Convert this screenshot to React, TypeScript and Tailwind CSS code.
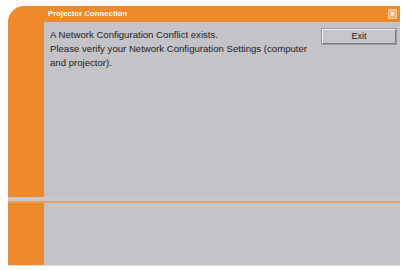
export default function App() {
  return (
    <div className="w-[404px] h-[270px] bg-white pl-[8px] pt-[6px] font-['Liberation_Sans',sans-serif]">
      <div className="w-[392px] flex flex-col">
        {/* title bar */}
        <div className="h-[16px] bg-[#ef8a2a] rounded-tl-[16px] flex items-center justify-between pl-[40px] pr-[3px]">
          <span className="text-white text-[7.6px] font-bold leading-none tracking-[0.1px]">Projector Connection</span>
          <div className="w-[9px] h-[10px] bg-[#f5b070] border border-[#f7c89a] flex items-center justify-center text-white text-[8px] font-bold leading-none">
            x
          </div>
        </div>

        {/* main body */}
        <div className="flex h-[175px]">
          <div className="w-[36px] bg-[#ef8a2a] border-l-[2px] border-[#d98a4e]" />
          <div className="flex-1 bg-[#c4c3c8] flex pt-[6px] pl-[6px] pr-[4px]">
            <div className="flex-1 text-[9.6px] leading-[14px] text-[#222]">
              <p>A Network Configuration Conflict exists.</p>
              <p>Please verify your Network Configuration Settings (computer</p>
              <p>and projector).</p>
            </div>
            <button className="w-[74px] h-[15px] mt-[1px] bg-[#c6c5ca] border border-t-[#f2f2f2] border-l-[#f2f2f2] border-b-[#7c7c80] border-r-[#7c7c80] outline outline-1 outline-[#9a9a9e] text-[9px] leading-none text-[#222]">
              Exit
            </button>
          </div>
        </div>

        {/* separator */}
        <div className="h-[4px] bg-[#c8c8cc]" />
        <div className="h-[2px] bg-[#e9a05c]" />

        {/* bottom panel */}
        <div className="flex h-[62px]">
          <div className="w-[36px] bg-[#ef8a2a] border-l-[2px] border-[#d98a4e]" />
          <div className="flex-1 bg-[#c4c3c8]" />
        </div>
        <div className="h-[1px] bg-[#dcdcde]" />
      </div>
    </div>
  );
}
